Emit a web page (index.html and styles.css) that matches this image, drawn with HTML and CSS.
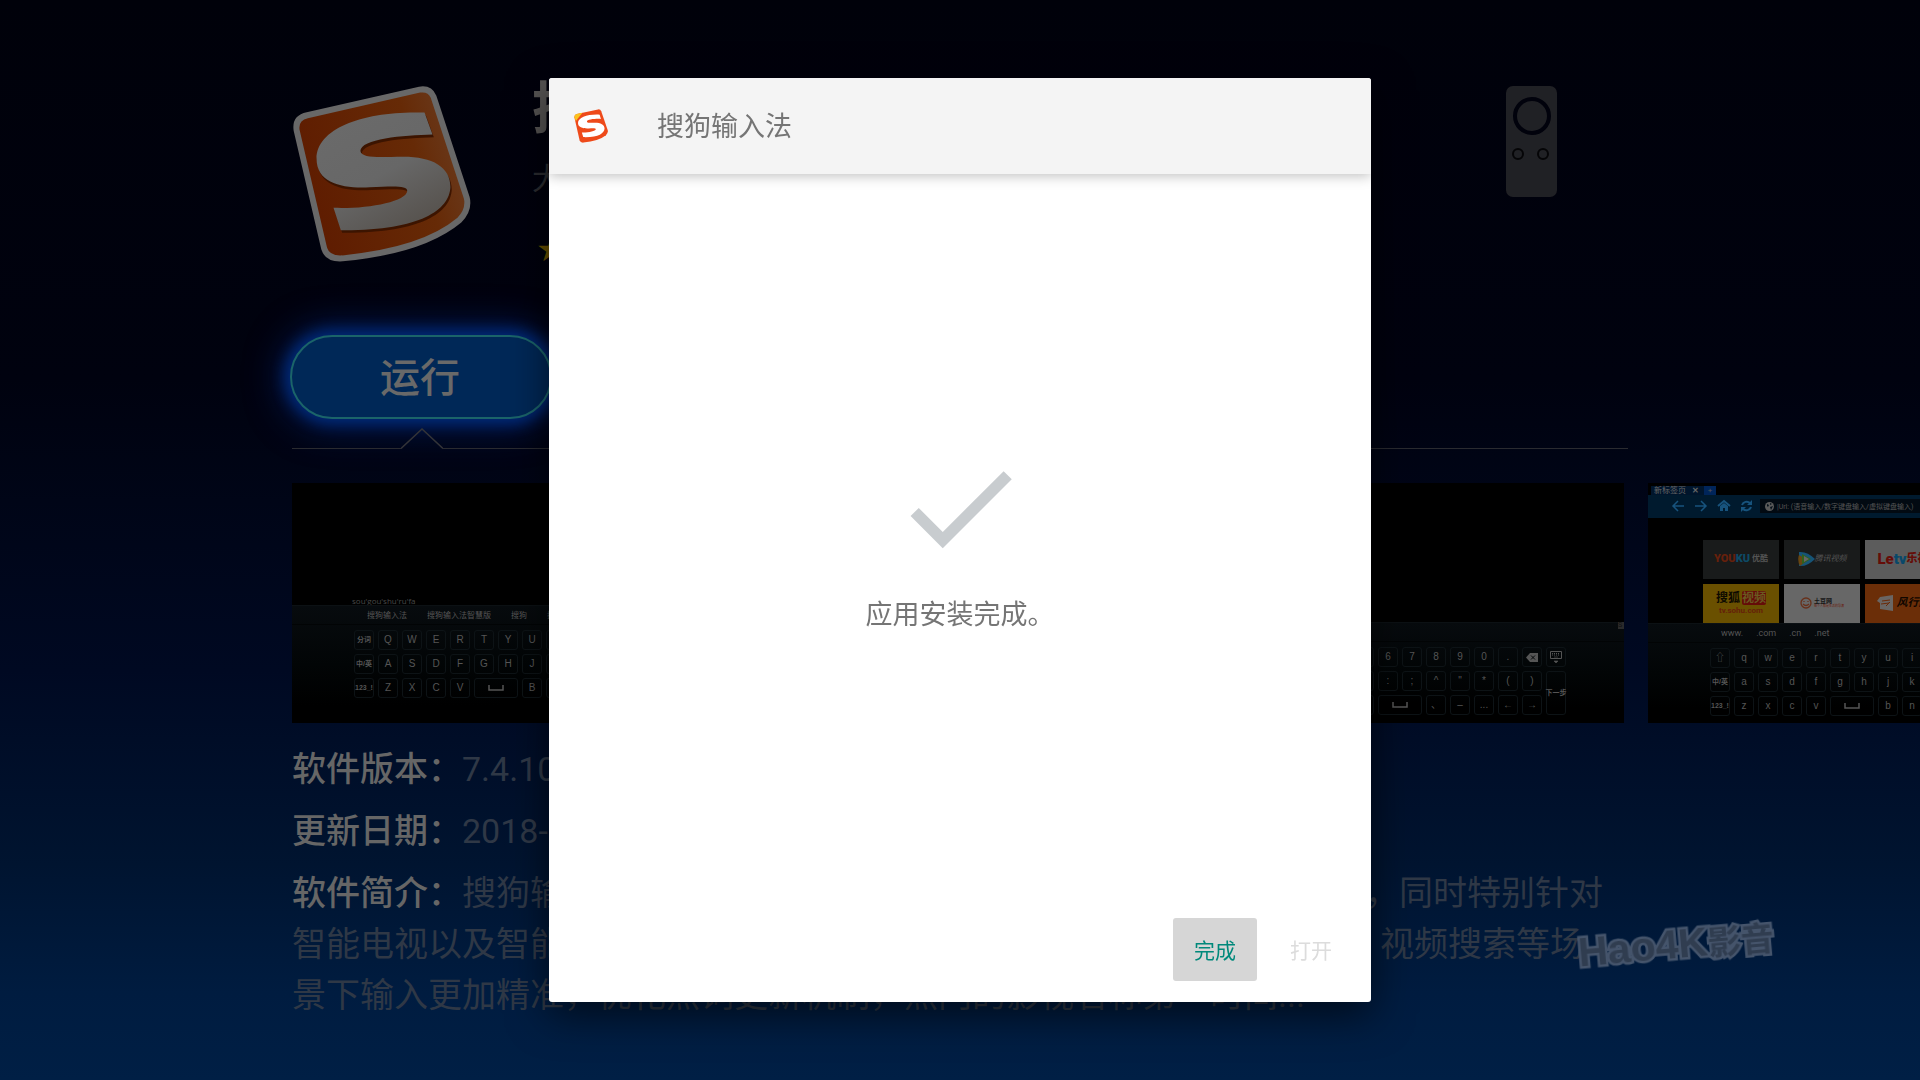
FILE: index.html
```html
<!DOCTYPE html>
<html lang="zh-CN">
<head>
  <meta charset="UTF-8">
  <title>搜狗输入法</title>
  <meta name="viewport" content="width=device-width, initial-scale=1.0">
  <link rel="stylesheet" href="styles.css">
</head>
<body>

<main class="detail">
  <header class="app-header">
    <svg class="app-logo" viewBox="66 72 542 538" aria-hidden="true">
      <defs>
        <linearGradient id="logo-orange" x1="0" y1="0.6" x2="1" y2="0.3">
          <stop offset="0" stop-color="#5e1b00"/>
          <stop offset="0.7" stop-color="#662a06"/>
          <stop offset="1" stop-color="#6a3c20"/>
        </linearGradient>
        <linearGradient id="logo-letter" x1="0" y1="0" x2="0.6" y2="1">
          <stop offset="0" stop-color="#6b6b6b"/>
          <stop offset="0.6" stop-color="#676767"/>
          <stop offset="1" stop-color="#585450"/>
        </linearGradient>
      </defs>
      <path fill="url(#logo-orange)" stroke="#686868" stroke-width="18" d="M80 210Q74 172 112 164L450 87Q481 82 492 108L592 412Q601 448 570 480Q460 572 218 595Q173 598 163 566Z"/>
      <path fill="#3c1400" transform="translate(4 8)" d="M465 156L489 222C400 224 272 235 272 272C275 295 330 290 400 289C490 289 543 320 543 380C540 450 450 512 213 510L191 443C290 447 410 425 413 392C414 375 370 378 300 381C220 385 140 370 140 295C140 200 290 150 465 156Z"/>
      <path fill="url(#logo-letter)" d="M465 156L489 222C400 224 272 235 272 272C275 295 330 290 400 289C490 289 543 320 543 380C540 450 450 512 213 510L191 443C290 447 410 425 413 392C414 375 370 378 300 381C220 385 140 370 140 295C140 200 290 150 465 156Z"/>
    </svg>
    <div class="app-meta">
      <h1>搜狗输入法</h1>
      <p class="app-size">大小：23.5MB</p>
      <p class="app-stars">★★★★★</p>
    </div>
    <svg class="remote" viewBox="0 0 51 111" aria-hidden="true">
      <rect width="51" height="111" rx="7" fill="#202125"/>
      <circle cx="26" cy="30" r="17" fill="none" stroke="#01020c" stroke-width="4"/>
      <circle cx="12" cy="68" r="5" fill="none" stroke="#050507" stroke-width="2"/>
      <circle cx="37" cy="68" r="5" fill="none" stroke="#050507" stroke-width="2"/>
    </svg>
  </header>

  <button class="run-btn" type="button">运行</button>

  <div class="divider">
    <span class="line line-start"></span>
    <svg viewBox="0 0 42 21" width="42" height="21" aria-hidden="true"><path d="M0 20.5L21 1L42 20.5" fill="none" stroke="#333438" stroke-width="1.5"/></svg>
    <span class="line"></span>
  </div>

  <div class="shots">
    <div class="shot">
      <div class="pinyin">sou'gou'shu'ru'fa</div>
      <div class="ime">
        <div class="words"><span>搜狗输入法</span><span>搜狗输入法智慧版</span><span>搜狗</span><span>搜</span></div>
        <div class="keys" data-keys="分词 Q W E R T Y U I O P del kbd|中/英 A S D F G H J K L ' , 下一步|123_! Z X C V space B N M ← →"></div>
      </div>
    </div>
    <div class="shot">
      <div class="ime">
        <div class="words"></div>
        <div class="keys" data-keys="分词 Q W E R T Y U I O P del kbd|中/英 A S D F G H J K L ' , 下一步|123_! Z X C V space B N M ← →"></div>
      </div>
    </div>
    <div class="shot">
      <div class="ime short">
        <div class="words"></div>
        <div class="keys" data-keys="1 2 3 4 5 6 7 8 9 0 . del kbd|@ # / ! ? : ; ^ &quot; * ( ) 下一步|ABC _ &amp; % + space 、 – ... ← →"></div>
      </div>
      <span class="badge-s">S</span>
    </div>
    <div class="shot">
      <div class="tabs"><span class="tab">新标签页 <b>✕</b></span><span class="tab-new">+</span></div>
      <div class="toolbar">
        <svg width="84" height="16" viewBox="0 0 84 16" fill="none" stroke="#17537d" stroke-width="1.5" aria-hidden="true">
          <path d="M13 8H2M7 3L2 8L7 13"/>
          <path d="M24 8H35M30 3L35 8L30 13"/>
          <path d="M47 8L53 3L59 8" stroke-width="2"/>
          <path d="M49 8L53 5L57 8V13H54V10H52V13H49Z" fill="#17537d" stroke="none"/>
          <path d="M71 7A5 5 0 0 1 79 5M80 9A5 5 0 0 1 72 11" stroke-width="2"/>
          <path d="M81 2V7H76ZM70 14V9H75Z" fill="#17537d" stroke="none"/>
        </svg>
        <span class="url">
          <svg width="9" height="9" viewBox="0 0 9 9" aria-hidden="true"><circle cx="4.5" cy="4.5" r="4.5" fill="#5a5a5a"/><path d="M2 2L4 3L3 5L2 4ZM5 5L8 4L6 8ZM5 1L7 2L5 3Z" fill="#05101a"/></svg>
          |Url: (语音输入/数字键盘输入/虚拟键盘输入)
        </span>
      </div>
      <div class="tiles">
        <span class="tile youku"><b>YOU</b><b class="ku">KU</b><i>优酷</i></span>
        <span class="tile tencent">
          <svg width="17" height="16" viewBox="0 0 17 16" aria-hidden="true"><path d="M1 1Q9 0 17 8Q9 16 1 15Z" fill="#165477"/><path d="M1 4L10 9L2 15Q-1 9 1 4Z" fill="#684510"/><path d="M4 3L13 8L4 13Z" fill="#30611c"/><path d="M6 5L11 8L6 11Z" fill="#666"/></svg>
          <i>腾讯视频</i>
        </span>
        <span class="tile letv"><b>Le</b><b class="tv">tv</b><b>乐视</b></span>
        <span class="tile sohu"><span>搜狐<em>视频</em></span><small>tv.sohu.com</small></span>
        <span class="tile tudou">
          <svg width="12" height="12" viewBox="0 0 12 12" fill="none" stroke="#68301a" stroke-width="1.3" aria-hidden="true"><circle cx="6" cy="6" r="5"/><path d="M4 4V5M8 4V5M3 7Q6 10 9 7"/></svg>
          <span><b>土豆网</b><small>每个人都是生活的导演</small></span>
        </span>
        <span class="tile fengxing">
          <svg width="17" height="16" viewBox="0 0 17 16" aria-hidden="true"><path d="M0 6L3 2L16 0V16L3 14V8Z" fill="#6a6664"/><path d="M5 6L13 5M4 9L12 8M9 11L13 7" stroke="#6b2a08" fill="none"/></svg>
          <b>风行网</b>
        </span>
      </div>
      <div class="ime short">
        <div class="words web"><span>www.</span><span>.com</span><span>.cn</span><span>.net</span></div>
        <div class="keys" data-keys="⇧ q w e r t y u i o p del kbd|中/英 a s d f g h j k l ' , 下一步|123_! z x c v space b n m ← →"></div>
      </div>
    </div>
  </div>

  <div class="info">
    <p><strong>软件版本：</strong>7.4.10</p>
    <p><strong>更新日期：</strong>2018-09-14</p>
    <p><strong>软件简介：</strong>搜狗输入法智慧版搜狗专为大屏打造的输入法，支持9键输入，同时特别针对<br>智能电视以及智能盒子的使用场景进行了深度优化，让用户在影视点播、视频搜索等场<br>景下输入更加精准，优化热词更新机制，热门的影视名称第一时间...</p>
  </div>
</main>

<div class="overlay">
  <section class="dialog" role="dialog" aria-labelledby="dialog-title">
    <header class="dialog-header">
      <svg width="34" height="34" viewBox="66 72 542 538" aria-hidden="true">
        <path fill="#ee4a1a" d="M72 200Q70 160 110 150L450 76Q485 70 500 105L604 410Q612 450 575 488Q460 580 215 606Q165 608 155 570Z"/>
        <path fill="#fbc31c" d="M72 200Q70 160 110 150L200 130L96 260Z"/>
        <path fill="#fff" d="M475 160L495 228C400 224 272 235 272 272C275 295 330 290 400 289C490 289 553 320 553 380C550 460 450 525 213 518L191 443C290 447 410 425 413 392C414 375 370 378 300 381C220 385 130 370 130 295C130 200 290 150 475 160Z"/>
      </svg>
      <h2 id="dialog-title">搜狗输入法</h2>
    </header>
    <div class="dialog-body">
      <svg width="138" height="138" viewBox="0 0 24 24" aria-hidden="true"><path fill="#c8cccf" d="M9 16.17L4.83 12L3.41 13.41L9 19L21 7L19.59 5.59Z"/></svg>
      <p>应用安装完成。</p>
    </div>
    <footer class="dialog-actions">
      <button class="done" type="button">完成</button>
      <button type="button" disabled>打开</button>
    </footer>
  </section>
</div>

<div class="watermark"><span>Hao4K</span>影音</div>

<script>
  const glyphs = {
    space: '<svg width="16" height="6" viewBox="0 0 16 6"><path d="M1 0V5H15V0" fill="none" stroke="currentColor" stroke-width="1.5"/></svg>',
    del: '<svg width="12" height="9" viewBox="0 0 12 9"><path d="M4 0H12V9H4L0 4.5Z" fill="currentColor"/><path d="M5 2.5L9 6.5M9 2.5L5 6.5" stroke="#020507"/></svg>',
    kbd: '<svg width="12" height="13" viewBox="0 0 12 13"><path d="M.5 .5H11.5V7.5H.5Z" fill="none" stroke="currentColor"/><path d="M2 2.5H10M2 4H10" stroke="currentColor" stroke-dasharray="1 1"/><path d="M4 6H8M4 10H8L6 12Z" fill="currentColor" stroke="currentColor" stroke-width=".6"/></svg>'
  };

  document.querySelectorAll('.keys').forEach(board => {
    board.dataset.keys.split('|').forEach(row => {
      row.split(' ').forEach(key => {
        const el = document.createElement('span');
        el.className = 'key';
        if (key === 'space') el.classList.add('wide');
        if (key === '下一步') el.classList.add('tall');
        if (key.length > 1 && key !== '...' && !glyphs[key]) el.classList.add('small');
        if (glyphs[key]) {
          el.innerHTML = glyphs[key];
        } else {
          el.textContent = key;
        }
        board.appendChild(el);
      });
    });
  });
</script>

</body>
</html>
```
FILE: styles.css
```css
* {
  box-sizing: border-box;
}

body {
  margin: 0;
  height: 100vh;
  overflow: hidden;
  font-family: Roboto, "Noto Sans CJK SC", sans-serif;
  background: linear-gradient(to bottom, #00010a 0%, #00020f 35%, #000922 62%, #001430 80%, #001c40 92%, #001f45 100%);
}

h1, h2, p {
  margin: 0;
  font-weight: 400;
}

/* app page */
.detail {
  padding: 84px 0 0 292px;
}

.app-header {
  display: flex;
  align-items: flex-start;
  height: 251px;
  padding-right: 363px;
}

.app-logo {
  width: 180px;
  height: 180px;
}

.app-meta {
  flex: 1;
  margin-left: 60px;
}

.app-meta h1 {
  margin-top: -9px;
  font-size: 56px;
  line-height: 68px;
  font-weight: 700;
  color: #575554;
}

.app-size {
  margin-top: 12px;
  font-size: 30px;
  line-height: 48px;
  color: #2b2c30;
}

.app-stars {
  margin-top: 28px;
  padding-left: 4px;
  font-family: "DejaVu Sans", sans-serif;
  font-size: 34px;
  line-height: 36px;
  color: #6b5200;
}

.remote {
  width: 51px;
  height: 111px;
  margin-top: 2px;
}

.run-btn {
  display: block;
  width: 262px;
  height: 84px;
  margin-left: -2px;
  padding: 0 2px 5px 0;
  border: 2px solid #1b6469;
  border-radius: 42px;
  background: #002857;
  box-shadow: 0 0 14px 5px #002a78, 0 0 36px 8px #001c58;
  font-family: inherit;
  font-size: 40px;
  font-weight: 500;
  color: #696969;
}

.divider {
  display: flex;
  align-items: flex-end;
  margin: 9px 292px 34px 0;
}

.line {
  flex: 1;
  height: 1px;
  background: #2a2b30;
}

.line-start {
  flex: 0 0 109px;
}

/* screenshots */
.shots {
  display: flex;
  gap: 24px;
  overflow: hidden;
}

.shot {
  position: relative;
  display: flex;
  flex: 0 0 428px;
  flex-direction: column;
  height: 240px;
  overflow: hidden;
  background: #000;
  color: #555;
}

.pinyin {
  margin-top: auto;
  padding-left: 60px;
  font-family: "Open Sans", sans-serif;
  font-size: 8px;
  line-height: 9px;
  color: #484848;
}

.ime {
  height: 118px;
  margin-top: auto;
  border-top: 1px solid #0c1114;
  background: linear-gradient(to bottom, #070b0e, #020506 50%, #000 85%);
}

.pinyin + .ime {
  margin-top: 0;
}

.ime.short {
  height: 101px;
}

.words {
  display: flex;
  gap: 20px;
  height: 19px;
  padding-left: 75px;
  border-bottom: 1px solid #020405;
  font-size: 8px;
  line-height: 19px;
  white-space: nowrap;
}

.words.web {
  gap: 13px;
  padding-left: 73px;
  font-size: 9px;
}

.keys {
  display: grid;
  grid-template-columns: repeat(13, 20px);
  grid-auto-rows: 20px;
  gap: 4px;
  padding: 5px 0 0 62px;
}

.key {
  display: flex;
  align-items: center;
  justify-content: center;
  border: 1px solid #0d1316;
  border-radius: 3px;
  font-family: "Liberation Sans", "Noto Sans CJK SC", sans-serif;
  font-size: 10px;
  line-height: 10px;
}

.key.wide {
  grid-column: span 2;
}

.key.tall {
  grid-row: span 2;
}

.key.small {
  font-size: 7px;
  font-weight: 700;
  white-space: nowrap;
}

.badge-s {
  position: absolute;
  top: 139px;
  right: 0;
  width: 6px;
  background: #2b2b2b;
  font-size: 7px;
  line-height: 7px;
  color: #111;
}

.tabs {
  display: flex;
  height: 12px;
  padding: 3px 0 0 3px;
  font-size: 8px;
  line-height: 9px;
}

.tab {
  padding: 0 5px 0 3px;
  background: #00152c;
  color: #666;
}

.tab b {
  margin-left: 4px;
}

.tab-new {
  width: 12px;
  background: #00255a;
  text-align: center;
}

.toolbar {
  display: flex;
  align-items: center;
  gap: 5px;
  height: 23px;
  padding-left: 23px;
  background: #001a2e;
}

.url {
  display: flex;
  flex: 1;
  align-items: center;
  gap: 3px;
  height: 14px;
  padding-left: 5px;
  background: #020a12;
  font-size: 7px;
  white-space: nowrap;
}

.tiles {
  display: grid;
  grid-template-columns: repeat(3, 76px);
  grid-auto-rows: 39px;
  gap: 5px;
  padding: 22px 0 0 55px;
}

.tile {
  display: flex;
  align-items: center;
  justify-content: center;
  background: #191b1b;
  font-size: 11px;
  line-height: 12px;
}

.tile i {
  font-size: 8px;
}

.youku b {
  font-weight: 900;
  color: #66200c;
}

.youku .ku {
  color: #0d4a66;
}

.youku i {
  margin-left: 2px;
  font-style: normal;
  font-weight: 700;
}

.letv {
  background: #5c5c5c;
  font-size: 15px;
  color: #650d08;
}

.letv b {
  font-weight: 900;
}

.letv .tv {
  color: #08486a;
}

.letv b:last-child {
  font-size: 11px;
}

.sohu {
  flex-direction: column;
  background: #6a5000;
  font-size: 12px;
  font-weight: 700;
  line-height: 15px;
  color: #0d0a00;
}

.sohu em {
  margin-left: 2px;
  border-radius: 2px;
  background: #650c08;
  font-style: normal;
  color: #6a5a20;
}

.sohu small {
  font-size: 8px;
  line-height: 10px;
  color: #65200a;
}

.tudou {
  gap: 2px;
  background: #676767;
  color: #161616;
}

.tudou b {
  display: block;
  font-size: 6px;
  line-height: 6px;
}

.tudou small {
  display: block;
  font-size: 3px;
  line-height: 4px;
  color: #682010;
}

.fengxing {
  gap: 3px;
  background: #6b2e08;
  color: #100600;
}

.fengxing b {
  font-style: italic;
}

/* description */
.info {
  display: flex;
  flex-direction: column;
  gap: 11px;
  padding-top: 21px;
  font-size: 34px;
  line-height: 51px;
  white-space: nowrap;
  color: #2f3846;
}

.info strong {
  font-weight: 500;
  color: #666;
}

/* installer dialog */
.overlay {
  position: fixed;
  inset: 0;
  display: flex;
  align-items: center;
  justify-content: center;
}

.dialog {
  display: flex;
  flex-direction: column;
  width: 822px;
  max-width: 90vw;
  min-height: 924px;
  border-radius: 3px;
  background: #fff;
  box-shadow: 0 12px 40px rgba(0, 0, 0, 0.6);
  overflow: hidden;
}

.dialog-header {
  display: flex;
  align-items: center;
  gap: 49px;
  height: 96px;
  padding-left: 25px;
  background: #f4f4f4;
  box-shadow: 0 2px 12px rgba(0, 0, 0, 0.25);
}

.dialog-header h2 {
  padding-bottom: 4px;
  font-size: 27px;
  color: #757575;
}

.dialog-body {
  display: flex;
  flex: 1;
  flex-direction: column;
  align-items: center;
  justify-content: center;
  gap: 18px;
  padding-bottom: 18px;
}

.dialog-body p {
  font-size: 27px;
  line-height: 40px;
  color: #757575;
}

.dialog-actions {
  display: flex;
  justify-content: flex-end;
  gap: 12px;
  padding: 0 18px 21px;
}

.dialog-actions button {
  width: 84px;
  height: 63px;
  padding: 0 0 2px;
  border: 0;
  border-radius: 3px;
  background: none;
  font-family: inherit;
  font-size: 21px;
  color: #dcdcdc;
}

.dialog-actions .done {
  background: #d6d6d6;
  color: #00897b;
}

.watermark {
  position: fixed;
  right: 146px;
  bottom: 109px;
  font-family: "Liberation Sans", "Noto Sans CJK SC", sans-serif;
  font-size: 33px;
  font-weight: 700;
  line-height: 48px;
  color: #303d50;
  -webkit-text-stroke: 5px #45546b;
  paint-order: stroke fill;
  transform: rotate(-5deg);
}

.watermark span {
  font-size: 41px;
}
```
